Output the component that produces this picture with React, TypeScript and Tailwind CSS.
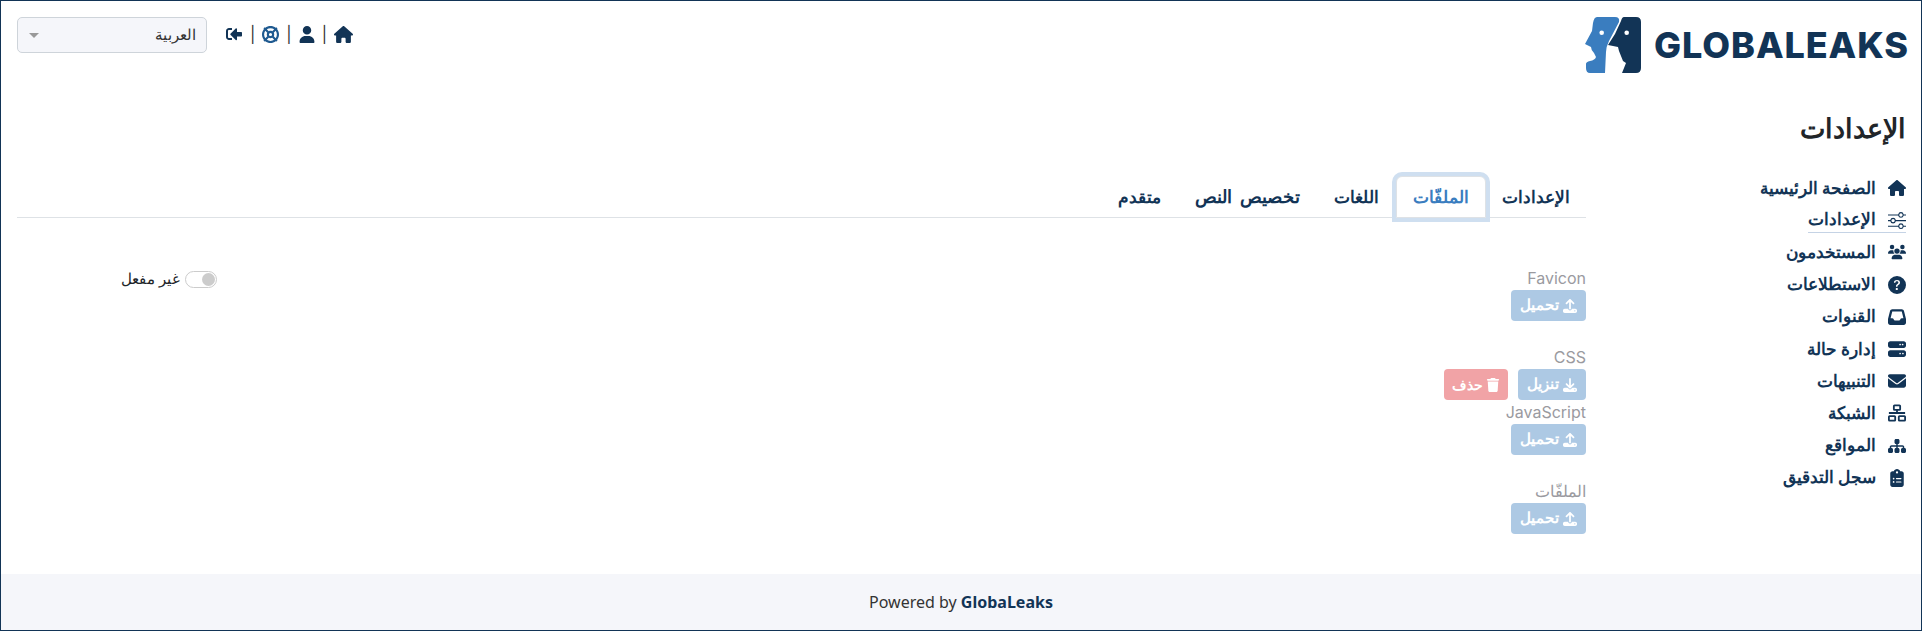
import { BsSliders, BsQuestionCircleFill } from "react-icons/bs";
import { FaSignInAlt } from "react-icons/fa";
import {
  FaHouse,
  FaUsers,
  FaInbox,
  FaServer,
  FaEnvelope,
  FaSitemap,
  FaClipboardList,
  FaUser,
  FaLifeRing,
  FaUpload,
  FaDownload,
  FaTrash,
} from "react-icons/fa6";

function NetworkIcon({ className }: { className?: string }) {
  return (
    <svg viewBox="0 0 20 20" className={className} fill="none" stroke="currentColor" strokeWidth="2">
      <rect x="6.5" y="1.5" width="7" height="5" rx="0.8" />
      <rect x="1" y="13.5" width="7" height="5" rx="0.8" />
      <rect x="12" y="13.5" width="7" height="5" rx="0.8" />
      <path d="M10 6.5v3.5M1 10h18" />
    </svg>
  );
}

const navItems = [
  { label: "الصفحة الرئيسية", icon: FaHouse },
  { label: "الإعدادات", icon: BsSliders, active: true },
  { label: "المستخدمون", icon: FaUsers },
  { label: "الاستطلاعات", icon: BsQuestionCircleFill },
  { label: "القنوات", icon: FaInbox },
  { label: "إدارة حالة", icon: FaServer },
  { label: "التنبيهات", icon: FaEnvelope },
  { label: "الشبكة", icon: NetworkIcon },
  { label: "المواقع", icon: FaSitemap },
  { label: "سجل التدقيق", icon: FaClipboardList },
];

const tabs = [
  { label: "الإعدادات", size: "text-[16.7px] px-[15px]" },
  { label: "الملفّات", size: "text-[17px] px-[16px]", active: true },
  { label: "اللغات", size: "text-[17px] px-[16px]" },
  { label: "تخصيص النص", size: "text-[17.6px] px-[16px] [word-spacing:4px]" },
  { label: "متقدم", size: "text-[17px] px-[16px]" },
];

function Logo() {
  return (
    <div className="flex items-center gap-[13px]" dir="ltr">
      <svg viewBox="0 0 56 56" className="w-[56px] h-[56px]">
        <path
          d="M12 0H30Q35 0 34 5L24 24Q21 30 21 35L20 56H5Q1 56 1 51V47Q1 45 5 44Q10 43 11 40L9 36Q6 33 6 30L0 27L7 14L8 6Q9 0 12 0Z"
          fill="#3a7dbf"
        />
        <circle cx="16.7" cy="15.7" r="2.3" fill="#fff" />
        <path
          d="M39 0H51Q56 0 56 5V51Q56 56 51 56H37L41 46L38 44L34 34L33 30L23 28L30 17L36 4Q37 0 39 0Z"
          fill="#123456"
        />
        <circle cx="41.7" cy="15.7" r="2.3" fill="#fff" />
      </svg>
      <span className="text-[36px] font-extrabold text-[#123456] font-['Inter',sans-serif] tracking-[0.9px] leading-none">
        GLOBALEAKS
      </span>
    </div>
  );
}

function HeaderActions() {
  return (
    <div className="flex items-center gap-[7px] text-[#123456] pb-[2px]">
      <FaHouse className="w-[19px] h-[17px]" />
      <span className="text-[#333]">|</span>
      <FaUser className="w-[16px] h-[17px]" />
      <span className="text-[#333]">|</span>
      <FaLifeRing className="w-[17px] h-[17px] text-[#1f5a90]" />
      <span className="text-[#333]">|</span>
      <FaSignInAlt className="w-[18px] h-[16px] -scale-x-100" />
    </div>
  );
}

function ActionButton({ label, icon: Icon, danger }: { label: string; icon: any; danger?: boolean }) {
  return (
    <span
      className={`inline-flex items-center h-[31px] rounded-[4px] text-white font-bold ${
        danger ? "bg-[#f1a3a6] text-[14px] gap-[3px] px-[8px]" : "bg-[#adc9e4] text-[15px] gap-[4px] px-[9px]"
      }`}
    >
      <Icon className="w-[14px] h-[14px]" />
      {label}
    </span>
  );
}

function FileRow({ label, children, className }: { label: string; children: React.ReactNode; className?: string }) {
  return (
    <div className={className}>
      <div className="text-[16px] leading-[24px] text-[#9a9a9f] h-[24px]">{label}</div>
      <div className="flex gap-[10px]">{children}</div>
    </div>
  );
}

export default function App() {
  return (
    <div
      dir="rtl"
      className="h-[631px] flex flex-col border border-[#123456] bg-white text-[#212529] font-['Inter','Noto_Sans',sans-serif]"
    >
      <header className="flex justify-between items-start h-[83px] pt-[16px] pr-[12px] pl-[16px]">
        <Logo />
        <div className="flex items-center gap-[18px]">
          <HeaderActions />
          <div className="flex items-center justify-between w-[190px] h-[36px] px-[10px] bg-[#f5f6fa] border border-[#ced4da] rounded-[5px] text-[15px] text-[#333]">
            العربية
            <span className="w-0 h-0 border-x-[5px] border-x-transparent border-t-[5px] border-t-[#999] ml-[1px]" />
          </div>
        </div>
      </header>

      <div className="flex-1 flex pr-[15px] pl-[16px]">
        <aside className="w-[320px]">
          <h1 className="text-[27px] font-semibold leading-[32px] mt-[29px] mb-[27px] text-[#212529]">الإعدادات</h1>
          <nav className="flex flex-col items-start">
            {navItems.map(({ label, icon: Icon, active }) => (
              <div key={label} className="h-[32.2px] flex items-center">
                <div
                  className={`flex items-center h-[25px] gap-[12px] text-[16.7px] font-bold text-[#123456] ${
                    active ? "border-b border-[#c5d3e5]" : ""
                  }`}
                >
                  <Icon className="w-[18px] h-[18px] shrink-0" />
                  <span>{label}</span>
                </div>
              </div>
            ))}
          </nav>
        </aside>

        <main className="flex-1">
          <div className="mt-[92px] flex border-b border-[#dee2e6] h-[42px]">
            {tabs.map((tab) => (
              <div
                key={tab.label}
                className={`h-[42px] py-[8px] leading-[24px] font-semibold border ${tab.size} ${
                  tab.active
                    ? "border-[#dee2e6] rounded-t-[6px] text-[#3a7dbf] shadow-[0_0_0_4px_#cfdff0] bg-white"
                    : "border-transparent text-[#123456]"
                }`}
              >
                {tab.label}
              </div>
            ))}
          </div>

          <div className="flex mt-[48px]">
            <div className="flex-1">
              <FileRow label="Favicon" className="mb-[24px]">
                <ActionButton label="تحميل" icon={FaUpload} />
              </FileRow>
              <FileRow label="CSS">
                <ActionButton label="تنزيل" icon={FaDownload} />
                <ActionButton label="حذف" icon={FaTrash} danger />
              </FileRow>
              <FileRow label="JavaScript" className="mb-[24px]">
                <ActionButton label="تحميل" icon={FaUpload} />
              </FileRow>
              <FileRow label="الملفّات">
                <ActionButton label="تحميل" icon={FaUpload} />
              </FileRow>
            </div>
            <div className="flex items-center gap-[5px] h-[22px] ml-[104px] mt-[2px] text-[15.3px]">
              <span className="w-[32px] h-[17px] rounded-full border border-[#ccc] flex items-center justify-start px-[1px]">
                <span className="w-[13px] h-[13px] rounded-full bg-[#ccc]" />
              </span>
              غير مفعل
            </div>
          </div>
        </main>
      </div>

      <footer className="h-[56px] bg-[#f5f6fa] flex items-center justify-center text-[16px] font-['Noto_Sans',sans-serif]" dir="ltr">
        <span className="text-[#333]">
          Powered by <span className="font-bold text-[#123456]">GlobaLeaks</span>
        </span>
      </footer>
    </div>
  );
}
